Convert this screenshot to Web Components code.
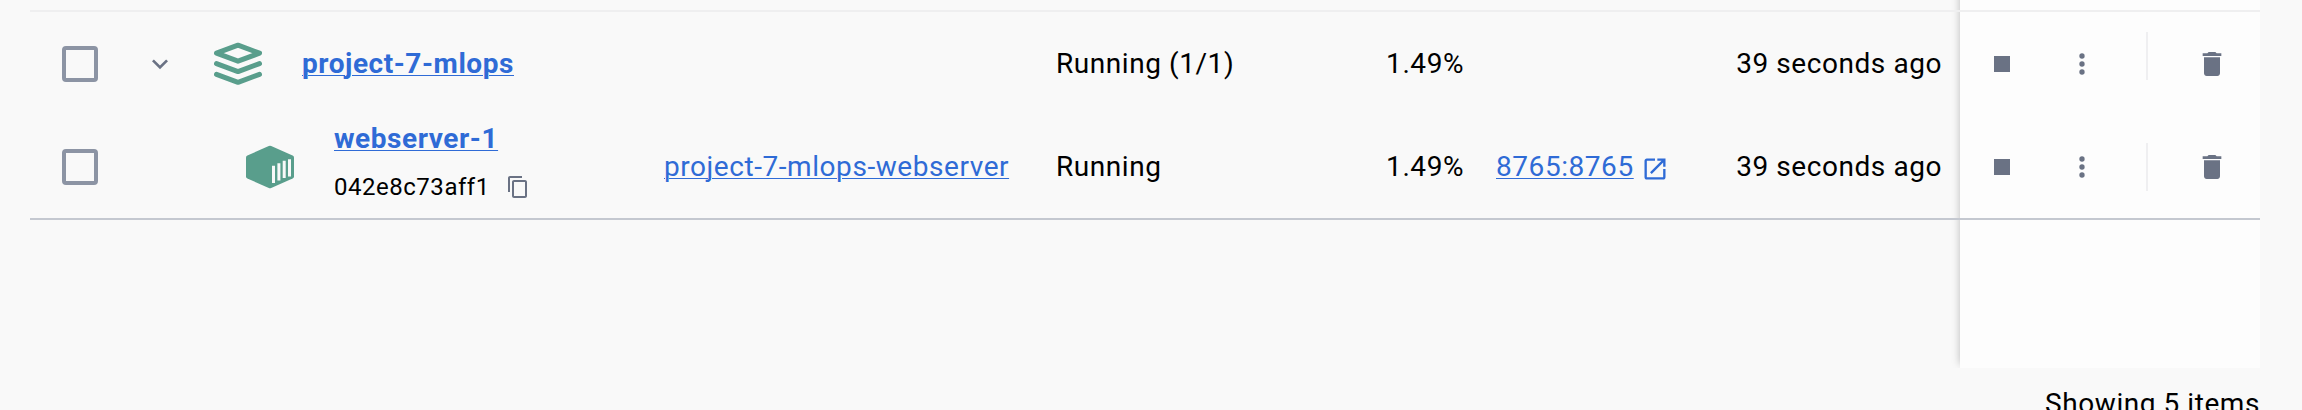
<!DOCTYPE html>
<html lang="en">
<head>
<meta charset="utf-8">
<title>Containers</title>
<style>
html,body{margin:0;height:410px;overflow:hidden;background:#f9f9f9}
body{font:28px/36px Roboto,sans-serif;letter-spacing:.56px;color:#000}
</style>
</head>
<body>
<container-table></container-table>
<script>
const define = (name, html) => {
  const t = document.createElement('template');
  t.innerHTML = html;
  customElements.define(name, class extends HTMLElement {
    constructor() {
      super();
      this.attachShadow({mode: 'open'}).append(t.content.cloneNode(true));
    }
  });
};

const svg = (w, h, box, body) => `<style>:host{display:block;flex:none;width:${w}px;height:${h}px}svg{display:block}</style><svg width="${w}" height="${h}" viewBox="${box}" fill="currentColor">${body}</svg>`;

define('icon-chevron', svg(32, 32, '0 0 24 24', '<path d="M16.59 8.59 12 13.17 7.41 8.59 6 10l6 6 6-6z"/>'));
define('icon-stop', svg(32, 32, '0 0 24 24', '<path d="M6 6h12v12H6z"/>'));
define('icon-more', svg(32, 32, '0 0 24 24', '<circle cx="12" cy="6" r="2"/><circle cx="12" cy="12" r="2"/><circle cx="12" cy="18" r="2"/>'));
define('icon-delete', svg(32, 32, '0 0 24 24', '<path d="M6 19c0 1.1.9 2 2 2h8c1.1 0 2-.9 2-2V7H6v12zM19 4h-3.5l-1-1h-5l-1 1H5v2h14V4z"/>'));
define('icon-copy', svg(24, 24, '0 0 24 24', '<path d="M16 1H4c-1.1 0-2 .9-2 2v14h2V3h12V1zm3 4H8c-1.1 0-2 .9-2 2v14c0 1.1.9 2 2 2h11c1.1 0 2-.9 2-2V7c0-1.1-.9-2-2-2zm0 16H8V7h11v14z"/>'));
define('icon-open', svg(28, 28, '0 0 24 24', '<path d="M19 19H5V5h7V3H5c-1.11 0-2 .9-2 2v14c0 1.1.89 2 2 2h14c1.1 0 2-.9 2-2v-7h-2v7zM14 3v2h3.59l-9.83 9.83 1.41 1.41L19 6.41V10h2V3h-7z"/>'));
define('icon-stack', svg(48, 44, '0 0 48 44', '<g fill="none" stroke="currentColor" stroke-width="5" stroke-linecap="round" stroke-linejoin="round"><path d="M24 3.2 45.5 11.2 24 19.2 2.500 11.2z"/><path d="M2.500 21.600 24 29.600l21.500-8M2.500 32.300l21.500 8 21.500-8"/></g>'));
define('icon-container', svg(48, 44, '0 0 48 44', '<path d="M22.800.9Q24 .4 25.200.9L46.600 10.500Q48 11.200 48 12.600V31.400Q48 32.800 46.600 33.500L25.200 43.100Q24 43.600 22.800 43.100L1.400 33.500Q0 32.800 0 31.400V12.600Q0 11.200 1.400 10.500z"/><g stroke="#f9f9f9" stroke-width="3"><path d="M27.500 20.700v17.300M32.900 18.200v17.300M38.200 15.800v17.300M43.500 14.200v17.300"/></g>'));

define('check-box', `<style>:host{display:block;box-sizing:border-box;width:36px;height:36px;border:4px solid #8c94a4;border-radius:4px}</style>`);

define('text-link', `<style>:host{display:block;color:#2f6bd6;white-space:nowrap}a{color:inherit;text-decoration:underline;text-decoration-thickness:1px;text-underline-offset:2px}</style><a><slot></slot></a>`);

define('row-actions', `<style>
:host{display:grid;grid-template-columns:80px 80px 50px 32px;align-items:center;color:#6a7284}
i{display:block;width:2px;height:48px;background:#efeff1;margin-top:var(--rule-shift,0)}
</style><icon-stop></icon-stop><icon-more></icon-more><i></i><icon-delete></icon-delete>`);

define('container-row', `<style>
:host{display:grid;box-sizing:border-box;align-items:center;white-space:nowrap;
grid-template-columns:100px 534px 392px 230px 178px 223px 255px 318px}
.check{padding-left:32px}
.cpu,.time{text-align:right}
.port{padding-left:32px}
.act{padding-left:44px}
</style>
<div class="check"><check-box></check-box></div>
<slot name="name"></slot><slot name="image"></slot><slot name="status"></slot>
<div class="cpu"><slot name="cpu"></slot></div>
<div class="port"><slot name="port"></slot></div>
<div class="time"><slot name="time"></slot></div>
<div class="act"><row-actions></row-actions></div>`);

define('action-panel', `<style>
:host{display:block;position:absolute;left:1930px;top:-20px;width:300px;height:388px;background:#fdfdfd;clip-path:inset(0 0 0 -20px);box-shadow:-4px 0 8px -4px rgba(0,0,0,.25)}
</style>`);

define('container-table', `<style>
:host{display:block;width:2230px;margin-left:30px;position:relative;height:410px}
.rows{position:relative;padding-top:10px;height:358px}
.r1{height:106px;border-top:2px solid #efeff0;--rule-shift:-16px}
.r2{height:104px;border-bottom:2px solid #c4c8d0}
.n{display:flex;align-items:center}
.teal{color:#599e8c}.gray{color:#6a7284}
b{font-weight:700}
.stack{display:grid;row-gap:12px;padding-bottom:9px}
.id{display:flex;align-items:center;font-size:24px;gap:16.500px;letter-spacing:.52px}
.p{display:flex;align-items:center;gap:7px;color:#2f6bd6}
footer{text-align:right;line-height:36px;padding-top:18px}
</style>
<action-panel></action-panel>
<div class="rows">
<container-row class="r1">
 <div slot="name" class="n"><icon-chevron class="gray" style="margin-left:14px"></icon-chevron><icon-stack class="teal" style="margin-left:38px"></icon-stack><text-link style="margin-left:40px"><b>project-7-mlops</b></text-link></div>
 <span slot="image"></span><span slot="status">Running (1/1)</span><span slot="cpu">1.49%</span><span slot="port"></span><span slot="time">39 seconds ago</span>
</container-row>
<container-row class="r2">
 <div slot="name" class="n"><icon-container class="teal" style="margin-left:116px"></icon-container><div class="stack" style="margin-left:40px"><text-link><b>webserver-1</b></text-link><div class="id"><span>042e8c73aff1</span><icon-copy class="gray"></icon-copy></div></div></div>
 <text-link slot="image">project-7-mlops-webserver</text-link><span slot="status">Running</span><span slot="cpu">1.49%</span><div slot="port" class="p"><text-link>8765:8765</text-link><icon-open style="margin-top:4px"></icon-open></div><span slot="time">39 seconds ago</span>
</container-row>
</div>
<footer>Showing 5 items</footer>`);
</script>
</body>
</html>
